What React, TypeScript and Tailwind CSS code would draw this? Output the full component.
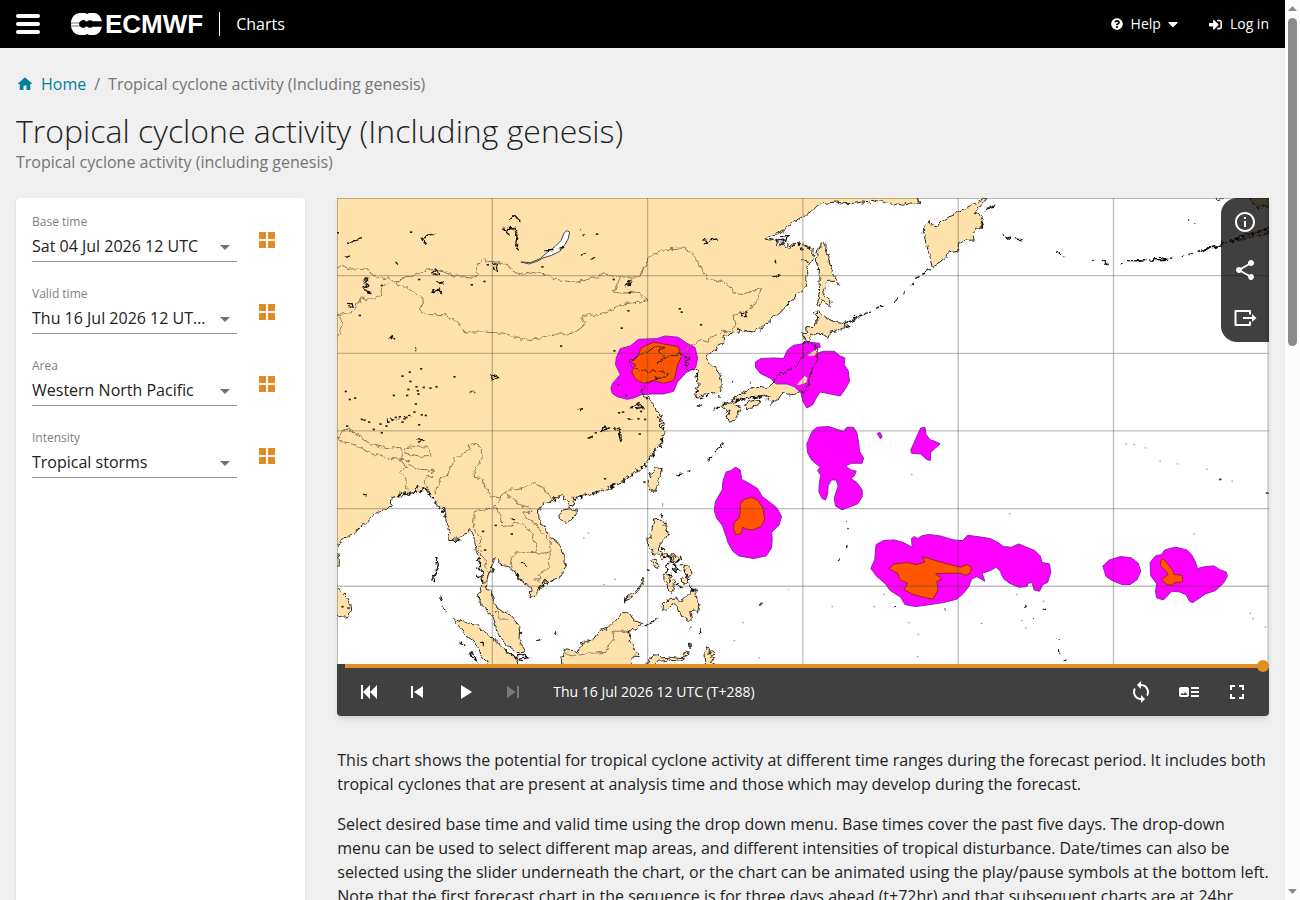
import { useState } from "react";
import type { ReactNode } from "react";
import { FaCaretDown, FaQuestionCircle, FaSignInAlt } from "react-icons/fa";
import { MdArtTrack, MdFullscreen, MdHome, MdInfoOutline, MdShare, MdSync } from "react-icons/md";

type Filter = {
  id: string;
  label: string;
  options: string[];
};

const filters: Filter[] = [
  { id: "base_time", label: "Base time", options: ["Sat 04 Jul 2026 12 UTC", "Sat 04 Jul 2026 00 UTC"] },
  { id: "valid_time", label: "Valid time", options: ["Thu 16 Jul 2026 12 UTC (T+288)", "Wed 15 Jul 2026 12 UTC (T+264)"] },
  { id: "area", label: "Area", options: ["Western North Pacific", "Eastern North Pacific"] },
  { id: "intensity", label: "Intensity", options: ["Tropical storms", "Tropical cyclones"] },
];

// Map geometry, in the units of the 2796 x 1398 chart view box
const land = [
  // Asian mainland
  "M-9,-9 L1739,-9 1745,12 1752,17 1740,14 1730,20 1716,17 1700,22 1684,18 1669,24 1660,14 1649,12 1638,8 1624,12 1609,6 1599,14 1575,12 1549,16 1520,17 1500,12 1479,14 1454,18 1430,34 1409,50 1390,60 1369,72 1352,86 1339,95 1320,107 1304,112 1287,122 1300,126 1314,123 1322,132 1318,140 1329,145 1340,142 1348,150 1359,150 1362,140 1369,143 1369,133 1384,134 1399,138 1412,147 1429,155 1427,170 1431,183 1420,190 1414,204 1409,218 1411,232 1406,248 1409,265 1400,271 1389,280 1371,302 1355,316 1339,335 1320,350 1304,364 1279,385 1264,396 1249,402 1234,400 1222,404 1214,395 1206,392 1203,402 1194,405 1184,404 1180,413 1160,411 1158,422 1164,430 1159,435 1145,442 1134,460 1120,466 1109,472 1107,483 1120,498 1134,510 1149,530 1154,548 1152,570 1147,580 1139,585 1124,583 1112,590 1104,587 1090,600 1079,600 1074,590 1082,580 1074,572 1088,565 1080,556 1074,549 1086,541 1080,530 1088,522 1077,515 1066,512 1059,519 1044,510 1052,498 1046,490 1059,485 1050,478 1044,480 1034,467 1016,474 1000,472 985,480 975,490 960,495 970,487 984,478 964,460 970,450 984,449 972,443 954,445 935,460 909,471 892,485 878,487 876,497 886,502 892,511 906,509 912,515 930,523 949,516 960,524 975,522 994,530 990,538 975,536 954,540 940,550 929,560 915,580 914,590 929,595 940,610 952,620 958,640 974,655 960,657 975,664 978,672 965,678 972,688 984,692 980,706 972,712 978,722 969,741 958,752 955,764 939,771 936,784 929,796 914,808 905,820 889,826 880,838 859,851 835,858 815,872 789,878 770,884 750,893 728,897 716,903 705,900 711,912 708,922 697,924 690,906 680,903 675,893 660,900 650,898 638,912 630,911 618,917 611,930 602,938 603,966 618,985 625,998 640,1016 660,1030 675,1052 682,1075 681,1090 687,1106 680,1115 678,1130 660,1142 640,1151 632,1160 618,1160 604,1180 588,1198 579,1195 582,1178 578,1162 560,1158 553,1145 540,1138 532,1120 515,1106 500,1104 485,1097 486,1084 468,1086 466,1120 455,1130 450,1148 448,1172 462,1180 466,1195 472,1212 478,1230 500,1240 520,1252 533,1268 545,1281 548,1300 546,1325 555,1345 565,1361 545,1366 525,1352 505,1336 490,1320 480,1300 474,1275 470,1256 455,1246 445,1228 427,1213 424,1195 432,1180 430,1168 437,1158 436,1138 432,1116 425,1092 428,1076 418,1060 415,1040 409,1020 403,1003 396,994 390,1007 376,1012 362,1026 355,1020 345,1029 334,1026 339,1005 333,980 322,962 327,948 318,932 300,923 288,902 278,888 268,872 255,876 248,884 230,882 212,892 190,894 165,899 163,920 148,935 120,941 98,962 80,981 62,996 50,1011 25,1020 8,1031 2,1045 -9,1050 Z",
  // Sri Lanka and the tip of India
  "M-6,1170 L8,1174 14,1184 28,1198 42,1222 44,1240 34,1256 14,1258 -6,1250 Z",
  "M-6,1060 L3,1070 7,1090 6,1104 -6,1114 Z",
  // Sumatra
  "M352,1262 L370,1270 400,1276 415,1278 432,1296 455,1314 470,1328 480,1330 488,1345 510,1356 520,1370 535,1376 545,1410 460,1410 450,1390 432,1370 420,1345 405,1325 385,1310 372,1292 360,1278 Z",
  // Borneo
  "M680,1410 L675,1378 683,1356 705,1358 726,1366 732,1334 770,1326 790,1300 815,1290 840,1264 860,1240 878,1250 890,1268 914,1276 904,1292 880,1296 872,1304 880,1318 876,1330 888,1345 907,1376 888,1375 880,1392 885,1410 Z",
  // Palawan, Sulawesi, Halmahera
  "M864,1210 L872,1198 895,1180 912,1156 924,1138 920,1154 900,1182 880,1202 Z",
  "M925,1410 L935,1385 952,1372 965,1370 975,1380 1000,1378 1035,1382 1042,1366 1054,1358 1050,1376 1030,1390 1000,1387 965,1390 945,1410 Z",
  "M1104,1410 L1106,1390 1104,1360 1112,1346 1118,1354 1116,1370 1124,1358 1134,1362 1120,1378 1134,1385 1122,1392 1136,1400 1138,1410 Z",
  // Philippines
  "M950,966 L975,964 985,976 984,990 991,1006 982,1024 970,1036 964,1056 980,1064 992,1072 1010,1070 1028,1086 1018,1094 1002,1084 990,1074 978,1082 964,1072 944,1066 948,1056 932,1042 930,1020 942,1024 944,1000 Z",
  "M945,1084 L958,1090 967,1108 960,1112 946,1092 Z",
  "M1038,1106 L1058,1104 1063,1130 1054,1138 1044,1120 Z",
  "M978,1130 L1002,1126 998,1148 986,1156 978,1146 Z",
  "M992,1160 L1006,1146 1016,1150 1008,1170 1002,1184 988,1172 Z",
  "M1034,1142 L1048,1130 1054,1150 1046,1160 1034,1154 Z",
  "M978,1238 L980,1216 1000,1202 1018,1200 1022,1212 1044,1200 1062,1180 1076,1176 1080,1200 1086,1220 1082,1246 1072,1236 1062,1240 1066,1262 1054,1268 1030,1250 1022,1226 1010,1216 992,1230 Z",
  // Taiwan and Hainan
  "M934,846 L944,826 960,810 976,812 972,832 964,850 956,868 950,884 942,872 934,864 Z",
  "M668,946 L680,936 705,932 722,938 715,954 700,968 685,974 670,964 Z",
  // Kyushu, Shikoku, Honshu, Hokkaido
  "M1158,620 L1180,612 1190,620 1212,630 1202,650 1194,670 1180,672 1170,660 1180,640 1166,636 Z",
  "M1222,618 L1245,610 1264,604 1272,612 1260,622 1240,628 1230,636 Z",
  "M1184,608 L1210,588 1236,574 1262,568 1290,572 1310,554 1318,538 1345,522 1366,512 1384,498 1398,476 1400,450 1396,434 1420,430 1432,444 1440,462 1444,490 1424,510 1418,540 1412,570 1402,588 1388,576 1380,588 1352,592 1336,586 1324,604 1304,616 1290,604 1296,592 1276,592 1240,598 1210,604 1190,612 Z",
  "M1398,428 L1402,420 1396,406 1410,402 1406,390 1430,388 1440,370 1438,336 1456,350 1482,368 1510,376 1522,370 1524,390 1500,396 1484,398 1476,418 1444,406 1430,410 1424,408 1414,432 Z",
  // Sakhalin
  "M1444,152 L1452,150 1452,136 1462,130 1468,142 1466,160 1474,178 1480,200 1490,226 1500,246 1508,262 1492,250 1474,250 1460,272 1462,290 1478,304 1480,324 1466,316 1458,308 1448,326 1442,318 1448,280 1446,240 1448,208 1438,180 Z",
  // Kamchatka
  "M1959,-9 L1930,10 1890,32 1854,48 1840,54 1822,66 1810,74 1798,90 1786,84 1776,70 1764,80 1762,106 1768,140 1778,170 1786,208 1808,196 1830,178 1832,166 1862,160 1866,134 1880,128 1912,126 1906,102 1916,94 1940,90 1930,76 1940,56 1914,46 1926,30 1944,10 1952,-9 Z",
  // Alaska
  "M2630,-9 L2642,6 2676,-9 Z",
  "M2738,-9 L2742,10 2756,24 2762,34 2776,24 2796,28 2802,-9 Z",
  "M2682,126 L2710,116 2740,106 2770,98 2802,84 2802,100 2770,112 2740,118 2714,124 2684,132 Z",
];

const baikal =
  "M552,192 L580,194 610,182 630,164 655,145 672,128 682,104 690,98 698,102 694,122 684,140 668,160 644,172 618,180 600,190 576,198 Z";

const borders = [
  "M0,210 L12,205 30,214 60,212 84,210 100,222 120,238 140,242 155,238 170,252 188,250 196,242 220,238 244,224 270,216 300,214 330,222 345,234 376,234 410,238 424,230 416,206 426,192 440,184 452,190 480,192 515,202 524,218 550,230 590,224 630,228 652,244 684,248 715,254 750,242 780,240 800,228 840,236 880,238 912,236 920,210 930,202",
  "M852,238 L840,258 830,282 850,286 876,284 900,282 920,300 930,308 912,312 870,316 840,328 810,342 780,354 756,350 738,352 734,366 746,378 730,392 712,404 690,408 650,408 620,416 582,428 540,420 500,406 470,404 430,402 384,402 358,370 322,350 280,350 254,344 248,332 256,318 254,296 226,282 210,268 184,262 180,252",
  "M160,256 L136,264 130,294 108,304 70,300 56,338 40,344 0,350 10,360 16,380 8,400 0,416",
  "M930,202 L932,180 950,168 1000,152 1040,150 1070,168 1084,196 1108,238 1150,250 1178,262 1188,284 1220,290 1250,276 1274,272 1262,300 1244,332 1216,344 1192,352 1194,386 1188,402",
  "M909,232 L918,216 930,202 M1186,404 L1160,400 1120,418 1116,432 1090,426 1060,446 1034,464",
  "M0,726 L12,700 40,696 60,710 100,738 150,752 190,748 196,762 188,780 220,790 200,784 160,782 120,772 80,756 40,736 0,726",
  "M206,752 L230,742 272,748 280,772 240,776 206,768 206,752",
  "M190,784 L206,806 188,824 206,836 210,878 M214,800 L236,812 288,818 286,838 268,834 262,852 274,876",
  "M294,890 L304,864 310,840 330,836 344,806 352,780 378,766 400,756 396,742 410,734 430,748 436,776 428,800 412,820 412,838 434,842 446,870 466,896 490,900 510,876 530,876 560,868 590,854 620,870 626,886 648,900",
  "M504,876 L512,896 536,906 548,920 578,928 582,944 558,942 562,958 590,970 612,1000 638,1030 644,1060 624,1066 590,1064 600,1048 590,1020 576,992 540,974 516,984 490,986 492,960 480,930 466,930 440,936 412,944 410,974 414,1000 432,1016 430,1040 424,1060 444,1080 446,1100 456,1128 438,1160",
  "M470,926 L494,900 M590,1064 L540,1062 524,1076 520,1100 532,1120 M640,1064 L636,1110 604,1132 606,1146 590,1146",
  "M680,1364 L712,1376 750,1366 806,1364 816,1340 828,1326 832,1300 884,1300 M470,1240 L484,1242 490,1264 514,1262",
];

// Lakes and island chains
const details = [
  "M518,66 L528,50 540,62 550,68 534,58 M496,96 L512,92 504,102 516,112 M510,88 L534,90 540,118 536,138 548,154",
  "M28,140 L50,128 76,122 M254,120 L272,114 292,106 M256,122 L270,140 M26,178 L36,174 M178,192 L182,200",
  "M80,242 L94,244 86,252 98,262 78,270 100,284 88,282 M286,226 L300,216 306,228 290,232 M298,250 L320,254 306,256",
  "M280,284 L296,272 290,282 306,276 316,288 M30,316 L46,318 48,328 34,326 M158,424 L166,416 172,422 M236,448 L242,462",
  "M470,196 L484,200 478,220 470,212 Z M862,264 L882,248 878,260 Z M460,534 L474,532 484,542 468,546 Z M622,158 L650,158 M668,150 L682,148",
  "M398,582 L408,580 416,588 M722,636 L736,632 734,640 M728,96 L730,98 M740,110 L744,112 M732,172 L746,166 M760,184 L772,180",
  "M880,630 L900,618 916,628 896,632 M796,696 L806,682 812,698 790,698 M838,694 L850,690 846,710 M870,662 L884,664 M750,722 L770,714 M844,700 L852,730",
  "M1098,124 L1110,132 1102,138 1120,128 1146,126 M1312,186 L1318,196 M1310,240 L1332,226 M1392,150 L1398,154 M1392,186 L1412,190",
  "M1330,116 L1354,112 1350,128 1336,132 M1320,130 L1340,126 M1210,346 L1226,342 1228,356 1212,356 Z",
  "M1522,380 L1545,368 1562,360 M1526,386 L1540,382 M1554,356 L1580,350 1602,342 M1618,334 L1642,322 M1672,308 L1684,300 M1700,286 L1704,284 M1722,262 L1732,256 M1738,244 L1748,238 M1756,226 L1782,214",
  "M1426,340 L1430,346 M1184,556 L1188,552 M1240,556 L1244,550",
  "M1998,108 L2020,122 M2038,122 L2054,126 M2156,162 L2176,166 M2180,176 L2184,176 M2266,188 L2276,184 M2292,188 L2316,200 M2352,200 L2360,196 M2372,188 L2426,188 2396,192 M2434,186 L2494,184 2466,178 M2500,182 L2508,178 M2532,174 L2540,172 M2552,170 L2572,166 M2586,160 L2620,146 2600,156 2650,142 2630,150 2670,134 M2556,66 L2560,66 M2572,78 L2576,78",
  "M1950,30 L1972,20 1968,28 1948,34 Z M1930,70 L1938,88 1926,86",
  "M298,1080 L304,1100 296,1128 304,1110 M292,1120 L290,1152 M308,1196 L314,1210 M318,1222 L324,1240 M420,1088 L432,1100 M420,1110 L434,1116 M418,1132 L432,1138",
  "M368,1332 L382,1340 M398,1364 L414,1376 418,1388 404,1380 Z M430,1332 L446,1344 M500,1352 L530,1376 560,1370 578,1380 540,1384 556,1392 M598,1328 L612,1324 M652,1304 L660,1312 M552,1094 L574,1108 M524,962 L534,966",
  "M182,894 L196,882 204,892 222,882 236,884 246,860 M240,722 L256,726 246,730 M78,892 L90,894 M600,1170 L620,1152 634,1152 M335,1026 L370,1028",
  "M1112,788 L1128,774 M1134,762 L1160,736 M1018,832 L1036,828 M1052,820 L1058,820 M975,916 L977,922 M968,950 L976,956 M1266,1222 L1274,1218",
  "M1062,1286 L1060,1300 M1088,1290 L1092,1308 M1058,1332 L1060,1350 M918,1286 L950,1270 964,1256 M865,1200 L862,1216 M930,1114 L938,1120 M975,1050 L984,1056",
  "M990,1068 L1004,1078 1000,1092 1014,1100 1026,1116 1010,1112 1020,1130 M996,1096 L986,1104 992,1118 M1016,1162 L1040,1170 M1054,1158 L1064,1180 M1030,1074 L1034,1086",
  "M1166,612 L1158,618 M1140,632 L1152,624 M1134,626 L1128,640 M1086,606 L1100,602 M1168,662 L1182,668 M1078,620 L1092,622 M1190,612 L1236,600 1276,596 M1148,592 L1150,600",
  "M1531,970 L1531,975 M1533,990 L1534,994 M1531,1042 L1529,1050 M1508,1082 L1504,1090 M1354,1176 L1356,1178 M1670,1226 L1676,1226 M1822,1238 L1826,1236 M2788,890 L2796,884",
  "M2118,1232 L2130,1238 M2062,1222 L2070,1226 M2086,1262 L2090,1258 M2162,1326 L2166,1326 M2168,1354 L2170,1372 M2176,1390 L2186,1390 M1934,1274 L1936,1274",
];

// Single dots for the small lakes of the Tibetan plateau and eastern China
const lakes = [
  [2, 104], [222, 102], [252, 512], [218, 522], [196, 534], [220, 550], [352, 536], [214, 574], [238, 566], [260, 568], [280, 570], [298, 566],
  [242, 578], [244, 588], [210, 592], [170, 592], [26, 580], [38, 604], [54, 600], [236, 618], [232, 642], [266, 652], [254, 650], [208, 658],
  [202, 662], [188, 656], [176, 658], [196, 672], [154, 672], [148, 684], [130, 678], [96, 672], [74, 664], [82, 666], [30, 684], [110, 694],
  [246, 680], [134, 704], [404, 260], [442, 250], [452, 200], [616, 206], [672, 444], [854, 390], [874, 338], [832, 458], [780, 108], [830, 244],
  [878, 284], [846, 644], [858, 642], [912, 640], [904, 662], [924, 664], [776, 704], [764, 716], [908, 708], [134, 262], [68, 352], [246, 244],
  [438, 1000], [476, 982], [524, 1008], [444, 1056], [804, 842], [1028, 332], [1034, 342], [1092, 380], [922, 852], [2650, 844],
  [34, 1230], [16, 1226], [844, 560], [868, 592],
];

// Atolls, barely visible at this scale
const atolls = [
  [2426, 750], [2392, 740], [2368, 738], [2470, 790], [2522, 798], [2610, 814], [2686, 850], [2748, 1262], [2740, 1246], [2786, 1288],
  [2572, 1008], [2018, 948], [740, 1020], [754, 1006], [800, 1160], [834, 1144], [1486, 1226], [1612, 1226], [1640, 1190], [1716, 1274],
  [1744, 1310], [1742, 1376], [1724, 830], [1192, 1328], [1218, 1274], [1266, 1380], [2040, 1190], [2054, 1268], [2066, 1290], [2120, 1210],
];

const gustAreas = [
  "M822,572 L826,558 850,530 836,500 838,480 850,452 880,444 905,424 960,422 985,414 1024,418 1050,436 1074,448 1082,480 1076,510 1048,524 1022,552 1010,580 980,588 945,588 914,590 890,600 870,604 840,596 826,586 Z",
  "M1256,492 L1272,482 1310,480 1340,482 1352,456 1370,442 1396,438 1404,432 1448,436 1450,448 1432,454 1440,466 1460,460 1492,460 1510,474 1524,480 1522,500 1534,518 1538,550 1526,572 1510,594 1480,588 1450,582 1438,600 1428,620 1410,630 1398,610 1392,584 1372,566 1350,558 1318,558 1302,542 1270,526 1256,508 Z",
  "M1426,700 L1440,688 1476,686 1500,694 1520,700 1530,688 1550,688 1560,704 1566,740 1568,760 1580,780 1576,796 1544,796 1526,804 1542,816 1558,820 1552,834 1542,842 1560,854 1576,876 1576,896 1562,918 1530,930 1516,936 1496,924 1492,900 1504,864 1498,846 1484,846 1474,862 1472,888 1466,906 1456,902 1446,882 1448,850 1452,832 1442,818 1450,808 1424,786 1412,764 1410,738 Z",
  "M1621,706 L1630,704 1636,718 1630,722 Z",
  "M1732,734 L1744,706 1752,690 1764,688 1768,710 1780,726 1794,730 1810,738 1796,750 1782,762 1780,788 1768,784 1752,768 1724,766 1722,756 Z",
  "M1168,822 L1182,818 1196,808 1210,816 1214,844 1236,856 1262,872 1276,896 1300,914 1320,930 1334,956 1326,982 1304,1004 1306,1022 1304,1050 1288,1074 1250,1082 1206,1074 1188,1060 1174,1036 1168,1016 1156,982 1140,962 1132,938 1136,910 1156,876 1158,850 Z",
  "M1618,1040 L1640,1028 1672,1026 1700,1034 1726,1048 1724,1022 1732,1016 1742,1022 1754,1014 1776,1010 1810,1014 1850,1026 1878,1028 1892,1012 1936,1018 1960,1022 1984,1034 2000,1046 2024,1048 2046,1038 2064,1046 2094,1058 2110,1074 2116,1094 2138,1098 2142,1124 2132,1154 2118,1160 2108,1180 2092,1176 2086,1154 2074,1156 2070,1166 2046,1168 2018,1156 2000,1142 1990,1120 1978,1108 1960,1118 1936,1126 1944,1150 1920,1136 1904,1144 1896,1166 1880,1186 1860,1204 1820,1214 1780,1220 1736,1226 1704,1220 1692,1198 1660,1178 1646,1158 1620,1136 1602,1112 1614,1084 1616,1056 Z",
  "M2298,1104 L2318,1086 2352,1076 2384,1080 2404,1096 2412,1120 2400,1146 2380,1160 2356,1160 2326,1148 2308,1136 Z",
  "M2440,1094 L2456,1074 2474,1070 2484,1056 2516,1048 2550,1056 2564,1070 2576,1092 2582,1112 2606,1106 2632,1104 2650,1116 2668,1122 2672,1134 2660,1156 2636,1178 2606,1188 2586,1202 2568,1214 2558,1210 2548,1190 2528,1182 2504,1180 2492,1194 2480,1206 2460,1200 2456,1180 2460,1158 2442,1134 Z",
];

const coreAreas = [
  "M884,522 L896,500 882,492 904,474 912,450 950,432 990,440 1024,446 1034,476 1022,500 1016,530 1010,548 980,556 950,548 920,556 896,544 Z",
  "M1210,918 L1222,904 1244,898 1262,906 1278,930 1284,964 1272,986 1248,996 1230,994 1218,988 1212,1008 1196,1010 1190,994 1192,972 1206,962 1210,944 Z",
  "M1656,1112 L1672,1098 1710,1094 1740,1100 1764,1092 1756,1076 1790,1086 1830,1098 1856,1104 1870,1108 1890,1100 1904,1108 1900,1126 1886,1132 1870,1126 1820,1126 1796,1128 1816,1144 1800,1150 1804,1176 1796,1190 1788,1204 1760,1198 1730,1190 1702,1176 1712,1156 1690,1146 1682,1126 Z",
  "M2472,1088 L2480,1082 2494,1100 2508,1118 2512,1130 2536,1132 2538,1152 2514,1154 2508,1162 2490,1160 2474,1144 2494,1130 2486,1118 2470,1104 Z",
];

function CycloneMap() {
  return (
    <svg viewBox="0 0 2796 1398" className="block aspect-[2/1] w-full bg-white" role="img" aria-label="Tropical cyclone activity map">
      {/* breaks the straight segments up into a natural shoreline */}
      <filter id="shore" filterUnits="userSpaceOnUse" x="-20" y="-20" width="2836" height="1438" colorInterpolationFilters="sRGB">
        <feTurbulence type="fractalNoise" baseFrequency="0.06" numOctaves="2" seed="4" />
        <feDisplacementMap in="SourceGraphic" scale="18" xChannelSelector="R" yChannelSelector="G" />
      </filter>
      <g fill="#ffe2ab" filter="url(#shore)">
        {land.map((d) => <path key={d} d={d} />)}
      </g>
      <path d={baikal} fill="#fff" stroke="#444" strokeWidth="3" />
      <g fill="#ff00ff" stroke="#8a1fc0" strokeWidth="3" strokeLinejoin="round">
        {gustAreas.map((d) => <path key={d} d={d} />)}
      </g>
      <g fill="#ff5500" stroke="#8a2a20" strokeWidth="3" strokeLinejoin="round">
        {coreAreas.map((d) => <path key={d} d={d} />)}
      </g>
      <path d="M1414,470 L1436,456 1442,464 1432,472 1416,476 Z M1380,560 L1404,534 1412,540 1408,554 1386,562 Z" fill="#ffe2ab" />
      <g fill="none" stroke="#8c7658" strokeWidth="3" strokeLinejoin="round" filter="url(#shore)">
        {borders.map((d) => <path key={d} d={d} />)}
      </g>
      <g fill="none" stroke="#2c2822" strokeWidth="3" strokeLinejoin="round" filter="url(#shore)">
        {land.map((d) => <path key={d} d={d} />)}
      </g>
      <g fill="none" stroke="#15130f" strokeWidth="4" filter="url(#shore)">
        {details.map((d) => <path key={d} d={d} />)}
      </g>
      <g fill="none" stroke="#15130f" strokeWidth="7" strokeDasharray="4 9 7 12 3 16" filter="url(#shore)">
        <path d="M185,892 L248,882 268,874 300,923 322,945 322,965" />
        <path d="M638,912 L675,893 M716,903 L789,878 859,851 889,826 929,796 955,764 969,741 980,706 984,690 962,655" />
        <path d="M425,1082 L437,1158 M532,1120 L560,1156 M604,1172 L636,1156 M872,1300 L890,1345" />
        <path d="M1080,515 L1076,597 1139,588 M1320,135 L1369,143 1399,138 1430,156" />
        <path d="M960,1066 L1010,1078 1040,1110 1060,1160 1084,1210 M986,1120 L1010,1140 1030,1170" />
        <path d="M500,92 L534,90 540,118 546,150 M84,244 L90,282 M800,690 L852,696 848,726 M884,628 L920,632" />
        <path d="M298,1080 L290,1150 M2686,128 L2796,92 M1184,608 L1300,592 M150,668 L220,656" />
      </g>
      <g fill="#2a251c">
        {lakes.map(([x, y]) => <rect key={`${x}-${y}`} x={x - 3} y={y - 2} width="7" height="5" />)}
      </g>
      <g fill="#a5a5a5">
        {atolls.map(([x, y]) => <rect key={`${x}-${y}`} x={x - 2} y={y - 2} width="5" height="4" />)}
      </g>
      <g stroke="#4a4438" strokeOpacity="0.35" strokeWidth="4">
        {[1, 466, 932, 1398, 1864, 2330, 2794].map((x) => <path key={x} d={`M${x},0 V1398`} />)}
        {[1, 233, 466, 699, 932, 1165].map((y) => <path key={y} d={`M0,${y} H2796`} />)}
      </g>
    </svg>
  );
}

function Logo() {
  return (
    <a href="#ecmwf" className="flex items-center gap-[3px] text-white" aria-label="ECMWF">
      <svg viewBox="0 0 31 22" width="31" height="22">
        <path d="M9 0h5l2 1 2-1h5c4 0 7 4 8 8.500H0C1 4 4 0 9 0zM9 22h5l2-1 2 1h5c4 0 7-4 8-8.500H0C1 18 4 22 9 22z" fill="#fff" />
        <path d="M0 8h22v6H0z" fill="#fff" />
        <path d="M0 9.500h9v1H0zM0 12.500h9v1H0z" fill="#777" />
        <path d="M8 11a4 4 0 0 1 7-2.500h1A4 4 0 0 1 22 8.500h9v5h-9a4 4 0 0 1-6 0h-1A4 4 0 0 1 8 11z" fill="#000" />
      </svg>
      <span className="font-['Liberation_Sans',sans-serif] text-[26px] leading-6 font-bold">ECMWF</span>
    </a>
  );
}

function BarButton({ label, disabled, children }: { label: string; disabled?: boolean; children: ReactNode }) {
  return (
    <button type="button" aria-label={label} disabled={disabled} className="flex size-12 items-center justify-center text-white disabled:text-[#797979]">
      {children}
    </button>
  );
}

function FilterField({ filter }: { filter: Filter }) {
  return (
    <div className="flex h-18 items-start">
      <div className="relative w-[205px]">
        <label htmlFor={filter.id} className="block text-xs text-[#808080]">{filter.label}</label>
        <select id={filter.id} className="block h-8 w-full appearance-none truncate border-b border-[#949494] bg-transparent pr-7 text-base text-[#222]">
          {filter.options.map((option) => <option key={option}>{option}</option>)}
        </select>
        <svg viewBox="0 0 10 5" className="pointer-events-none absolute right-[7px] bottom-3 h-[5px] w-[10px] fill-[#757575]">
          <path d="M0 0h10L5 5z" />
        </svg>
      </div>
      <button type="button" aria-label={`Show all: ${filter.label}`} className="mt-[18px] ml-[22px] text-[#e08e24]">
        <svg viewBox="0 0 16 16" width="16" height="16" fill="currentColor">
          <path d="M0 0h7v7H0zM9 0h7v7H9zM0 9h7v7H0zM9 9h7v7H9z" />
        </svg>
      </button>
    </div>
  );
}

export default function App() {
  const [step, setStep] = useState(10);

  return (
    <div className="flex h-screen overflow-hidden bg-[#f0f0f0] font-['Open_Sans',sans-serif] text-base text-[#222]">
      <div className="min-w-0 flex-1">
        <header className="flex h-12 items-center bg-black px-4 text-white">
          <button type="button" aria-label="Menu" className="flex w-6 flex-col gap-1">
            <span className="h-1 rounded-xs bg-white" />
            <span className="h-1 rounded-xs bg-white" />
            <span className="h-1 rounded-xs bg-white" />
          </button>
          <div className="ml-[31px]">
            <Logo />
          </div>
          <span className="ml-4 h-6 w-px bg-white" />
          <a href="#charts" className="ml-4">Charts</a>
          <nav className="ml-auto flex items-center gap-7 text-sm">
            <button type="button" className="flex items-center gap-2">
              <FaQuestionCircle size={12} />
              <span>Help</span>
              <FaCaretDown size={16} className="-ml-1" />
            </button>
            <a href="#login" className="flex items-center gap-2">
              <FaSignInAlt size={13} />
              Log in
            </a>
          </nav>
        </header>

        <div className="px-4 pt-6">
          <nav aria-label="Breadcrumb" className="flex items-center gap-2 text-[#757575]">
            <a href="#home" className="flex items-center gap-[7px] text-[#00829b]">
              <MdHome size={18} />
              Home
            </a>
            <span>/</span>
            <span>Tropical cyclone activity (Including genesis)</span>
          </nav>
          <h1 className="mt-4 text-[32px] leading-[38px] font-light">Tropical cyclone activity (Including genesis)</h1>
          <p className="text-[#757575]">Tropical cyclone activity (including genesis)</p>
        </div>

        <main className="mt-6 flex">
          <aside className="w-1/4 px-4">
            <div className="h-full min-h-screen rounded-sm bg-white px-4 pt-4 shadow-sm">
              {filters.map((filter) => <FilterField key={filter.id} filter={filter} />)}
            </div>
          </aside>

          <section className="w-3/4 px-4">
            <div className="relative rounded-b-sm shadow-md">
              <CycloneMap />
              <div className="absolute top-0 right-0 flex flex-col rounded-l-2xl bg-black/75">
                <BarButton label="Information"><MdInfoOutline size={24} /></BarButton>
                <BarButton label="Share"><MdShare size={24} /></BarButton>
                <BarButton label="Export">
                  <svg viewBox="0 0 24 24" width="24" height="24" fill="none">
                    <path d="M17 8.500V5H2.500V19H17V15.500" stroke="currentColor" strokeWidth="2" strokeLinejoin="round" />
                    <path d="M10 11h9V8l4.500 4-4.500 4v-3h-9z" fill="currentColor" />
                  </svg>
                </BarButton>
              </div>
              <div className="rounded-b-sm bg-[#404040] text-white">
                <div className="flex h-1 pl-2">
                  <input
                    type="range"
                    aria-label="Forecast step"
                    min={0}
                    max={10}
                    value={step}
                    onChange={(e) => setStep(Number(e.target.value))}
                    className="relative h-1 w-full appearance-none bg-[#e08e24] [&::-webkit-slider-thumb]:size-3 [&::-webkit-slider-thumb]:appearance-none [&::-webkit-slider-thumb]:rounded-full [&::-webkit-slider-thumb]:bg-[#e08e24]"
                  />
                </div>
                <div className="flex h-12 items-center px-2">
                  <BarButton label="First">
                    <svg viewBox="0 0 24 24" width="24" height="24" fill="currentColor">
                      <path d="M4 5h2v14H4zM13 5v14l-7-7zM20 5v14l-7-7z" />
                    </svg>
                  </BarButton>
                  <BarButton label="Previous">
                    <svg viewBox="0 0 24 24" width="24" height="24" fill="currentColor">
                      <path d="M6 6h2v12H6zM18 6v12l-9-6z" />
                    </svg>
                  </BarButton>
                  <BarButton label="Play">
                    <svg viewBox="0 0 24 24" width="24" height="24" fill="currentColor">
                      <path d="M8 5v14l11-7z" />
                    </svg>
                  </BarButton>
                  <BarButton label="Next" disabled>
                    <svg viewBox="0 0 24 24" width="24" height="24" fill="currentColor">
                      <path d="M6 6v12l9-6zM16 6h2v12h-2z" />
                    </svg>
                  </BarButton>
                  <span className="ml-4 text-sm">Thu 16 Jul 2026 12 UTC (T+288)</span>
                  <div className="ml-auto flex">
                    <BarButton label="Loop"><MdSync size={24} /></BarButton>
                    <BarButton label="Legend"><MdArtTrack size={24} /></BarButton>
                    <BarButton label="Full screen"><MdFullscreen size={24} /></BarButton>
                  </div>
                </div>
              </div>
            </div>

            <div className="mt-8 space-y-4">
              <p>
                This chart shows the potential for tropical cyclone activity at different time ranges during the forecast period. It includes both
                tropical cyclones that are present at analysis time and those which may develop during the forecast.
              </p>
              <p>
                Select desired base time and valid time using the drop down menu. Base times cover the past five days. The drop-down menu can be
                used to select different map areas, and different intensities of tropical disturbance. Date/times can also be selected using the
                slider underneath the chart, or the chart can be animated using the play/pause symbols at the bottom left. Note that the first
                forecast chart in the sequence is for three days ahead (t+72hr) and that subsequent charts are at 24hr
              </p>
            </div>
          </section>
        </main>
      </div>

      {/* scroll bar */}
      <div className="flex w-[15px] flex-col items-center justify-between bg-[#fcfcfc] py-1.5">
        <div className="flex flex-col items-center gap-[7px]">
          <svg viewBox="0 0 9 5" width="9" height="5" fill="#8b8b8b"><path d="M0 5h9L4.500 0z" /></svg>
          <span className="h-[328px] w-[9px] rounded-full bg-[#8b8b8b]" />
        </div>
        <svg viewBox="0 0 9 5" width="9" height="5" fill="#8b8b8b"><path d="M0 0h9L4.500 5z" /></svg>
      </div>
    </div>
  );
}
